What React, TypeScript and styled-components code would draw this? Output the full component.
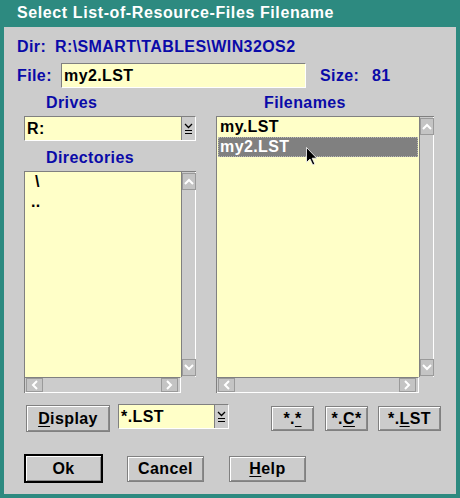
import React from 'react';
import styled, {createGlobalStyle} from 'styled-components';

const GlobalStyle = createGlobalStyle`
  body {
    margin: 0;
    background: #cccccc;
  }
  * {
    box-sizing: border-box;
  }
`;

const BLUE = '#0a0aa8';
const YELLOW = '#ffffc8';
const GRAY = '#cccccc';
const DARK = '#808080';

const baseFont = `
  font-family: "Liberation Sans", Arial, sans-serif;
  font-size: 16px;
  font-weight: bold;
  letter-spacing: 0.4px;
`;

const Win = {
  Frame: styled.div`
    width: 460px;
    height: 498px;
    background: #2d8a80;
    padding: 0 4px 4px 4px;
    display: flex;
    flex-direction: column;
    ${baseFont}
  `,
  Title: styled.div`
    height: 27px;
    padding-left: 13px;
    padding-top: 4px;
    color: #ffffff;
    letter-spacing: 0.6px;
    white-space: nowrap;
  `,
  Client: styled.div`
    position: relative;
    flex: 1;
    background: ${GRAY};
    display: flex;
    flex-direction: column;
  `,
};

const Info = {
  DirRow: styled.div`
    display: flex;
    margin-top: 11px;
    height: 17px;
    padding-left: 13px;
    color: ${BLUE};
    line-height: 17px;
  `,
  FileRow: styled.div`
    display: flex;
    align-items: center;
    margin-top: 8px;
    height: 25px;
    padding-left: 13px;
    color: ${BLUE};
  `,
  Label: styled.span<{$w: number}>`
    width: ${p => p.$w}px;
    flex-shrink: 0;
  `,
  Value: styled.span`
    white-space: nowrap;
  `,
};

const Field = styled.div<{$w: number}>`
  width: ${p => p.$w}px;
  height: 25px;
  background: ${YELLOW};
  border-top: 1px solid ${DARK};
  border-left: 1px solid ${DARK};
  border-bottom: 1px solid #ffffff;
  border-right: 1px solid #ffffff;
  color: #000000;
  padding: 2px 0 0 2px;
  line-height: 20px;
`;

const Main = {
  Wrapper: styled.div`
    display: flex;
    gap: 20px;
    margin-top: 6px;
    padding-left: 20px;
  `,
  Column: styled.div<{$w: number}>`
    width: ${p => p.$w}px;
    display: flex;
    flex-direction: column;
  `,
  GroupLabel: styled.div<{$indent: number; $top?: number}>`
    color: ${BLUE};
    height: 18px;
    line-height: 18px;
    padding-left: ${p => p.$indent}px;
    margin-top: ${p => p.$top ?? 0}px;
    margin-bottom: 4px;
  `,
};

const Combo = {
  Box: styled.div<{$w: number}>`
    display: flex;
    width: ${p => p.$w}px;
    height: 25px;
    border-top: 1px solid ${DARK};
    border-left: 1px solid ${DARK};
    border-bottom: 1px solid #ffffff;
    border-right: 1px solid #ffffff;
  `,
  Text: styled.div`
    flex: 1;
    background: ${YELLOW};
    color: #000000;
    padding: 2px 0 0 2px;
    line-height: 20px;
  `,
  Arrow: styled.div`
    width: 14px;
    background: ${GRAY};
    border-left: 1px solid ${DARK};
    display: flex;
    align-items: center;
    justify-content: center;
  `,
};

const List = {
  Frame: styled.div<{$h: number}>`
    display: grid;
    grid-template-columns: 1fr 15px;
    grid-template-rows: 1fr 16px;
    height: ${p => p.$h}px;
    border-top: 1px solid ${DARK};
    border-left: 1px solid ${DARK};
  `,
  Area: styled.div`
    background: ${YELLOW};
    padding: 0 1px;
    color: #000000;
    overflow: hidden;
  `,
  Item: styled.div<{$selected?: boolean; $indent: number}>`
    height: 20px;
    line-height: 20px;
    padding-left: ${p => p.$indent}px;
    background: ${p => (p.$selected ? '#808080' : 'transparent')};
    color: ${p => (p.$selected ? '#ffffff' : '#000000')};
    outline: ${p => (p.$selected ? '1px dotted #b8b8b8' : 'none')};
    outline-offset: -1px;
  `,
  VScroll: styled.div`
    display: flex;
    flex-direction: column;
    justify-content: space-between;
    background: ${GRAY};
    border-left: 1px solid ${DARK};
    border-right: 1px solid #ffffff;
    padding: 1px 0;
  `,
  HScroll: styled.div`
    display: flex;
    justify-content: space-between;
    align-items: center;
    background: ${GRAY};
    border-top: 1px solid ${DARK};
    border-bottom: 1px solid #ffffff;
    border-right: 1px solid #ffffff;
    padding: 0 2px 0 1px;
  `,
  Corner: styled.div`
    background: ${GRAY};
  `,
};

const ScrollBtn = styled.div<{$w: number; $h: number}>`
  width: ${p => p.$w}px;
  height: ${p => p.$h}px;
  background: #c4c4c4;
  border: 1px solid #9a9a9a;
  display: flex;
  align-items: center;
  justify-content: center;
`;

const Bar = {
  Filter: styled.div`
    display: flex;
    align-items: flex-start;
    margin-top: 11px;
    height: 28px;
  `,
  Bottom: styled.div`
    display: flex;
    align-items: flex-start;
    margin-top: 22px;
    padding-left: 20px;
  `,
};

const Button = styled.div<{$w: number; $h: number; $left: number; $top?: number; $default?: boolean}>`
  width: ${p => p.$w}px;
  height: ${p => p.$h}px;
  margin-left: ${p => p.$left}px;
  margin-top: ${p => p.$top ?? 0}px;
  background: ${GRAY};
  border: ${p => (p.$default ? '2px solid #000000' : `1px solid ${DARK}`)};
  box-shadow: inset 1px 1px #ffffff, inset -1px -1px #8a8a8a;
  color: #000000;
  display: flex;
  align-items: center;
  justify-content: center;
  flex-shrink: 0;
  u {
    text-decoration-thickness: 1px;
    text-underline-offset: 2px;
  }
`;

const Cursor = styled.svg`
  position: absolute;
  left: 302px;
  top: 120px;
`;

function ChevronUp() {
  return (
    <svg width="10" height="7" viewBox="0 0 10 7">
      <polyline points="1,6 5,2 9,6" fill="none" stroke="#ffffff" strokeWidth="2" />
    </svg>
  );
}

function ChevronDown() {
  return (
    <svg width="10" height="7" viewBox="0 0 10 7">
      <polyline points="1,1 5,5 9,1" fill="none" stroke="#ffffff" strokeWidth="2" />
    </svg>
  );
}

function ChevronLeft() {
  return (
    <svg width="7" height="10" viewBox="0 0 7 10">
      <polyline points="6,1 2,5 6,9" fill="none" stroke="#ffffff" strokeWidth="2" />
    </svg>
  );
}

function ChevronRight() {
  return (
    <svg width="7" height="10" viewBox="0 0 7 10">
      <polyline points="1,1 5,5 1,9" fill="none" stroke="#ffffff" strokeWidth="2" />
    </svg>
  );
}

function DropGlyph() {
  return (
    <svg width="9" height="12" viewBox="0 0 9 12">
      <polyline points="1,1 4.5,4.5 8,1" fill="none" stroke="#000000" strokeWidth="1.3" />
      <line x1="1" y1="7.5" x2="8" y2="7.5" stroke="#000000" strokeWidth="1" />
      <line x1="1" y1="10.5" x2="8" y2="10.5" stroke="#000000" strokeWidth="1" />
    </svg>
  );
}

type ListItem = {text: string; indent: number; selected?: boolean};

function ListBox({items, height}: {items: ListItem[]; height: number}) {
  return (
    <List.Frame $h={height}>
      <List.Area>
        {items.map((item, idx) => (
          <List.Item key={idx} $indent={item.indent} $selected={item.selected}>
            {item.text}
          </List.Item>
        ))}
      </List.Area>
      <List.VScroll>
        <ScrollBtn $w={14} $h={17}>
          <ChevronUp />
        </ScrollBtn>
        <ScrollBtn $w={14} $h={17}>
          <ChevronDown />
        </ScrollBtn>
      </List.VScroll>
      <List.HScroll>
        <ScrollBtn $w={17} $h={14}>
          <ChevronLeft />
        </ScrollBtn>
        <ScrollBtn $w={17} $h={14}>
          <ChevronRight />
        </ScrollBtn>
      </List.HScroll>
      <List.Corner />
    </List.Frame>
  );
}

const directories: ListItem[] = [
  {text: '\\', indent: 9},
  {text: '..', indent: 5},
];

const filenames: ListItem[] = [
  {text: 'my.LST', indent: 2},
  {text: 'my2.LST', indent: 2, selected: true},
];

export default function App() {
  return (
    <>
      <GlobalStyle />
      <Win.Frame>
        <Win.Title>Select List-of-Resource-Files Filename</Win.Title>
        <Win.Client>
          <Info.DirRow>
            <Info.Label $w={38}>Dir:</Info.Label>
            <Info.Value>R:\SMART\TABLES\WIN32OS2</Info.Value>
          </Info.DirRow>
          <Info.FileRow>
            <Info.Label $w={44}>File:</Info.Label>
            <Field $w={245}>my2.LST</Field>
            <Info.Label $w={52} style={{marginLeft: 14}}>
              Size:
            </Info.Label>
            <Info.Value>81</Info.Value>
          </Info.FileRow>

          <Main.Wrapper>
            <Main.Column $w={172}>
              <Main.GroupLabel $indent={22}>Drives</Main.GroupLabel>
              <Combo.Box $w={172}>
                <Combo.Text>R:</Combo.Text>
                <Combo.Arrow>
                  <DropGlyph />
                </Combo.Arrow>
              </Combo.Box>
              <Main.GroupLabel $indent={22} $top={8}>
                Directories
              </Main.GroupLabel>
              <ListBox items={directories} height={222} />
            </Main.Column>
            <Main.Column $w={218}>
              <Main.GroupLabel $indent={48}>Filenames</Main.GroupLabel>
              <ListBox items={filenames} height={277} />
            </Main.Column>
          </Main.Wrapper>

          <Bar.Filter>
            <Button $w={84} $h={27} $left={22} $top={1}>
              <span>
                <u>D</u>isplay
              </span>
            </Button>
            <Combo.Box $w={111} style={{marginLeft: 8}}>
              <Combo.Text>*.LST</Combo.Text>
              <Combo.Arrow>
                <DropGlyph />
              </Combo.Arrow>
            </Combo.Box>
            <Button $w={43} $h={25} $left={42} $top={2}>
              <span>
                *.<u>*</u>
              </span>
            </Button>
            <Button $w={43} $h={25} $left={11} $top={2}>
              <span>
                *.<u>C</u>*
              </span>
            </Button>
            <Button $w={63} $h={25} $left={10} $top={2}>
              <span>
                *.<u>L</u>ST
              </span>
            </Button>
          </Bar.Filter>

          <Bar.Bottom>
            <Button $w={79} $h={29} $left={0} $default>
              Ok
            </Button>
            <Button $w={77} $h={26} $left={24} $top={2}>
              Cancel
            </Button>
            <Button $w={77} $h={26} $left={25} $top={2}>
              <span>
                <u>H</u>elp
              </span>
            </Button>
          </Bar.Bottom>

          <Cursor width="12" height="19" viewBox="0 0 12 19">
            <path d="M0.5 0.5 L0.5 15.5 L4 12 L6.8 18 L8.8 17 L6.2 11.2 L10.8 11.2 Z" fill="#000000" stroke="#ffffff" strokeWidth="0.8" />
          </Cursor>
        </Win.Client>
      </Win.Frame>
    </>
  );
}
